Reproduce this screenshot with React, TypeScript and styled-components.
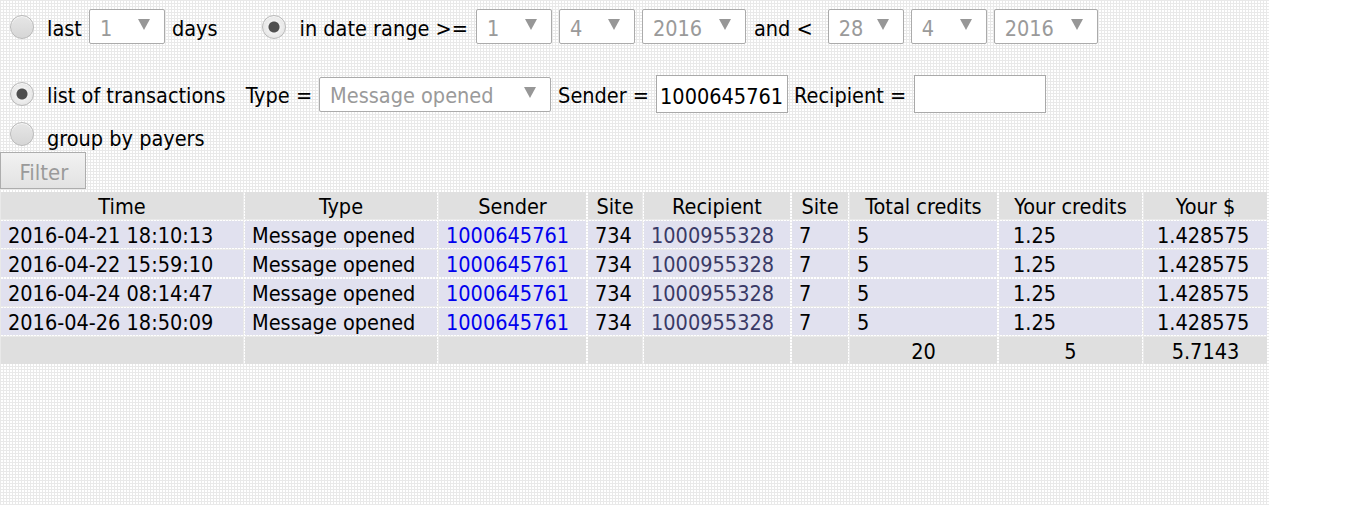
import React from "react";
import styled, { createGlobalStyle } from "styled-components";

interface IRow {
    time: string;
    type: string;
    sender: string;
    senderSite: string;
    recipient: string;
    recipientSite: string;
    total: string;
    credits: string;
    dollars: string;
}

const rows: IRow[] = [
    { time: '2016-04-21 18:10:13', type: 'Message opened', sender: '1000645761', senderSite: '734', recipient: '1000955328', recipientSite: '7', total: '5', credits: '1.25', dollars: '1.428575' },
    { time: '2016-04-22 15:59:10', type: 'Message opened', sender: '1000645761', senderSite: '734', recipient: '1000955328', recipientSite: '7', total: '5', credits: '1.25', dollars: '1.428575' },
    { time: '2016-04-24 08:14:47', type: 'Message opened', sender: '1000645761', senderSite: '734', recipient: '1000955328', recipientSite: '7', total: '5', credits: '1.25', dollars: '1.428575' },
    { time: '2016-04-26 18:50:09', type: 'Message opened', sender: '1000645761', senderSite: '734', recipient: '1000955328', recipientSite: '7', total: '5', credits: '1.25', dollars: '1.428575' },
];

const columns = [
    { title: 'Time', width: 242 },
    { title: 'Type', width: 192 },
    { title: 'Sender', width: 147 },
    { title: 'Site', width: 54 },
    { title: 'Recipient', width: 146 },
    { title: 'Site', width: 56 },
    { title: 'Total credits', width: 147 },
    { title: 'Your credits', width: 143 },
    { title: 'Your $', width: 123 },
];

const App: React.FC = () => {
    return (
        <Page>
            <GlobalStyle />
            <Row $top={9} $height={35}>
                <Radio />
                <Text $left={13}>last</Text>
                <Select $width={76} $left={7}>1</Select>
                <Text $left={7}>days</Text>
                <Radio $checked $left={44} />
                <Text $left={14}>in date range &gt;=</Text>
                <Select $width={76} $left={8}>1</Select>
                <Select $width={76} $left={7}>4</Select>
                <Select $width={104} $left={7}>2016</Select>
                <Text $left={8}>and &lt;</Text>
                <Select $width={76} $left={15}>28</Select>
                <Select $width={76} $left={7}>4</Select>
                <Select $width={104} $left={7}>2016</Select>
            </Row>
            <Row $top={31} $height={38}>
                <Radio $checked />
                <Text $left={13}>list of transactions</Text>
                <Text $left={20}>Type =</Text>
                <Select $width={232} $left={7}>Message opened</Select>
                <Text $left={7}>Sender =</Text>
                <Input $left={7} value="1000645761" readOnly />
                <Text $left={6}>Recipient =</Text>
                <Input $left={8} value="" readOnly />
            </Row>
            <Row $top={8} $height={26}>
                <Radio />
                <Text $left={13} $dy={9}>group by payers</Text>
            </Row>
            <FilterButton>Filter</FilterButton>
            <Table>
                <colgroup>
                    {columns.map((c, i) => <col key={i} style={{ width: c.width }} />)}
                </colgroup>
                <thead>
                    <tr>
                        {columns.map((c, i) => <Th key={i}>{c.title}</Th>)}
                    </tr>
                </thead>
                <tbody>
                    {rows.map((r, i) => (
                        <tr key={i}>
                            <Td>{r.time}</Td>
                            <Td>{r.type}</Td>
                            <Td><SenderLink>{r.sender}</SenderLink></Td>
                            <Td>{r.senderSite}</Td>
                            <Td><RecipientLink>{r.recipient}</RecipientLink></Td>
                            <Td>{r.recipientSite}</Td>
                            <Td>{r.total}</Td>
                            <Td $pad={14}>{r.credits}</Td>
                            <Td $pad={13}>{r.dollars}</Td>
                        </tr>
                    ))}
                </tbody>
                <tfoot>
                    <tr>
                        <Foot />
                        <Foot />
                        <Foot />
                        <Foot />
                        <Foot />
                        <Foot />
                        <Foot>20</Foot>
                        <Foot>5</Foot>
                        <Foot>5.7143</Foot>
                    </tr>
                </tfoot>
            </Table>
        </Page>
    )
}
export default App;


const GlobalStyle = createGlobalStyle`
  html, body {
    margin: 0;
    padding: 0;
    background: #fff;
  }
  body {
    font-family: "DejaVu Sans Condensed", "DejaVu Sans", sans-serif;
    font-size: 21.5px;
    color: #000;
  }
`;

const Page = styled.div`
  width: 1269px;
  min-height: 505px;
  overflow: hidden;
  background-color: #fff;
  background-image:
    linear-gradient(90deg, #e9e9e9 1px, transparent 1px),
    linear-gradient(#e9e9e9 1px, transparent 1px);
  background-size: 3px 3px;
`;

const Row = styled.div<{ $top: number; $height: number }>`
  display: flex;
  align-items: center;
  height: ${p => p.$height}px;
  margin-top: ${p => p.$top}px;
  padding-left: 10px;
  white-space: nowrap;
`;

const Text = styled.span<{ $left?: number; $dy?: number }>`
  margin-left: ${p => p.$left || 0}px;
  padding-top: ${p => (p.$dy !== undefined ? p.$dy : 4)}px;
  line-height: 1;
`;

const Radio = styled.span<{ $checked?: boolean; $left?: number }>`
  flex: none;
  width: 22px;
  height: 22px;
  margin-left: ${p => p.$left || 0}px;
  border: 1px solid #b9b9b9;
  border-radius: 50%;
  background: ${p => p.$checked
    ? 'radial-gradient(circle, #4f4f4f 0 5px, #f0f0f0 6px, #dcdcdc 100%)'
    : 'linear-gradient(#e6e6e6, #d6d6d6)'};
  box-shadow: inset 0 1px 1px rgba(255, 255, 255, 0.8);
`;

const Select = styled.div<{ $width: number; $left?: number }>`
  display: flex;
  align-items: center;
  justify-content: space-between;
  box-sizing: border-box;
  flex: none;
  width: ${p => p.$width}px;
  height: 35px;
  margin-left: ${p => p.$left || 0}px;
  padding: 3px 14px 0 10px;
  border: 1px solid #ababab;
  border-radius: 2px;
  background: #fff;
  color: #9a9a9a;
  &::after {
    content: '';
    border-left: 6px solid transparent;
    border-right: 6px solid transparent;
    border-top: 11px solid #979797;
    margin-top: -7px;
  }
`;

const Input = styled.input<{ $left?: number }>`
  box-sizing: border-box;
  width: 132px;
  height: 38px;
  margin-left: ${p => p.$left || 0}px;
  padding: 5px 2px 0 3px;
  border: 1px solid #a9a9a9;
  background: #fff;
  font: inherit;
  color: #000;
  outline: none;
`;

const FilterButton = styled.button`
  display: block;
  box-sizing: border-box;
  width: 86px;
  height: 37px;
  margin-top: 5px;
  padding: 3px 0 0 2px;
  border: 1px solid #adadad;
  border-radius: 0;
  background: linear-gradient(#f2f2f2, #e2e2e2);
  font: inherit;
  font-size: 22px;
  color: #9a9a9a;
  text-align: center;
`;

const Table = styled.table`
  table-layout: fixed;
  width: 1270px;
  margin-top: 1px;
  margin-left: -1px;
  border-collapse: separate;
  border-spacing: 2px;
`;

const Th = styled.th`
  height: 24px;
  padding: 3px 0 0;
  background: #e0e0e0;
  font-weight: normal;
  text-align: center;
  white-space: nowrap;
  line-height: 24px;
`;

const Td = styled.td<{ $pad?: number }>`
  height: 24px;
  padding: 3px 0 0 ${p => (p.$pad ? p.$pad : 7)}px;
  background: #e1e1ef;
  text-align: left;
  white-space: nowrap;
  line-height: 24px;
  overflow: hidden;
`;

const Foot = styled.td`
  height: 24px;
  padding: 3px 0 0;
  background: #dfdfdf;
  text-align: center;
  line-height: 24px;
`;

const SenderLink = styled.span`
  color: #0000ee;
`;

const RecipientLink = styled.span`
  color: #3a3a66;
`;
